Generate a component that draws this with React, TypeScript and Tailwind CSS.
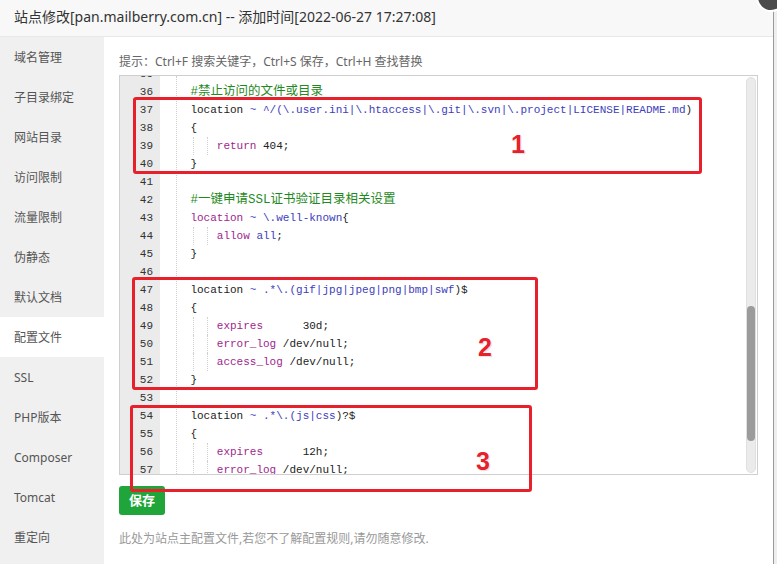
import React from "react";

type Tok = [string, string];

const C: Record<string, string> = {
    p: "text-[#222]",
    k: "text-[#a01f8d]",
    r: "text-[#3d3dbd]",
    c: "text-[#1f8a24] text-[12.5px]",
};

const lines: { n: number; lvl: number; toks: Tok[] }[] = [
    { n: 35, lvl: 0, toks: [] },
    { n: 36, lvl: 1, toks: [["c", "#禁止访问的文件或目录"]] },
    {
        n: 37,
        lvl: 1,
        toks: [
            ["p", "location"],
            ["r", " ~ ^/(\\.user.ini|\\.htaccess|\\.git|\\.svn|\\.project|LICENSE|README.md"],
            ["p", ")"],
        ],
    },
    { n: 38, lvl: 1, toks: [["p", "{"]] },
    { n: 39, lvl: 2, toks: [["k", "return"], ["p", " 404;"]] },
    { n: 40, lvl: 1, toks: [["p", "}"]] },
    { n: 41, lvl: 0, toks: [] },
    { n: 42, lvl: 1, toks: [["c", "#一键申请SSL证书验证目录相关设置"]] },
    { n: 43, lvl: 1, toks: [["k", "location"], ["r", " ~ \\.well-known"], ["p", "{"]] },
    { n: 44, lvl: 2, toks: [["k", "allow"], ["p", " "], ["r", "all"], ["p", ";"]] },
    { n: 45, lvl: 1, toks: [["p", "}"]] },
    { n: 46, lvl: 0, toks: [] },
    {
        n: 47,
        lvl: 1,
        toks: [
            ["p", "location"],
            ["r", " ~ .*\\.(gif|jpg|jpeg|png|bmp|swf"],
            ["p", ")$"],
        ],
    },
    { n: 48, lvl: 1, toks: [["p", "{"]] },
    { n: 49, lvl: 2, toks: [["k", "expires"], ["p", "      30d;"]] },
    { n: 50, lvl: 2, toks: [["k", "error_log"], ["p", " /dev/null;"]] },
    { n: 51, lvl: 2, toks: [["k", "access_log"], ["p", " /dev/null;"]] },
    { n: 52, lvl: 1, toks: [["p", "}"]] },
    { n: 53, lvl: 0, toks: [] },
    { n: 54, lvl: 1, toks: [["p", "location"], ["r", " ~ .*\\.(js|css"], ["p", ")?$"]] },
    { n: 55, lvl: 1, toks: [["p", "{"]] },
    { n: 56, lvl: 2, toks: [["k", "expires"], ["p", "      12h;"]] },
    { n: 57, lvl: 2, toks: [["k", "error_log"], ["p", " /dev/null;"]] },
];

const menu = [
    "域名管理",
    "子目录绑定",
    "网站目录",
    "访问限制",
    "流量限制",
    "伪静态",
    "默认文档",
    "配置文件",
    "SSL",
    "PHP版本",
    "Composer",
    "Tomcat",
    "重定向",
];

const mono = "font-['Liberation_Mono','Noto_Sans_CJK_SC',monospace] text-[11px]";

const Editor = () => (
    <div className="h-[400px] border border-[#cfcfcf] flex overflow-hidden">
        <div className="w-[40px] bg-[#ebebeb] overflow-hidden shrink-0">
            <div className={`-mt-[11px] ${mono} text-[#333] text-right pr-[7px]`}>
                {lines.map((l) => (
                    <div key={l.n} className="h-[18px] leading-[18px]">
                        {l.n}
                    </div>
                ))}
            </div>
        </div>
        <div className="flex-1 overflow-hidden relative">
            <div className="absolute left-[16px] top-0 bottom-0 border-l border-dotted border-[#cfcfcf]" />
            <div className={`-mt-[11px] pl-[4px] ${mono}`}>
                {lines.map((l) => (
                    <div key={l.n} className="h-[18px] leading-[18px] whitespace-pre relative">
                        {l.lvl === 2 && (
                            <>
                                <span className="absolute left-[29px] top-0 h-full border-l border-dotted border-[#cfcfcf]" />
                                <span className="absolute left-[43px] top-0 h-full border-l border-dotted border-[#cfcfcf]" />
                            </>
                        )}
                        {l.toks.length > 0 && <span>{l.lvl === 2 ? "        " : "    "}</span>}
                        {l.toks.map((t, i) => (
                            <span key={i} className={C[t[0]]}>
                                {t[1]}
                            </span>
                        ))}
                    </div>
                ))}
            </div>
        </div>
        <div className="w-[10px] shrink-0 py-px mr-px">
            <div className="h-full rounded-full bg-[#ebebeb] border border-[#e0e0e0]">
                <div className="mt-[228px] h-[135px] rounded-full bg-[#9b9b9b]" />
            </div>
        </div>
    </div>
);

const Mark = ({ n, cls }: { n: string; cls: string }) => (
    <div
        className={`absolute font-['Liberation_Sans',sans-serif] font-bold text-[25px] leading-[25px] text-[#e8202c] [text-shadow:0_0_2px_#fff,0_0_2px_#fff,1px_1px_1px_#ccc] ${cls}`}
    >
        {n}
    </div>
);

export default function App() {
    return (
        <div className="w-[777px] h-[564px] relative overflow-hidden flex bg-white font-['Noto_Sans','Noto_Sans_CJK_SC',sans-serif]">
            <div className="w-[773px] shrink-0 flex flex-col">
                <div className="h-[37px] shrink-0 bg-[#f8f8f8] border-b border-[#e8e8e8] pl-[14px] pb-[3px] flex items-center text-[14px] text-[#333]">
                    站点修改[pan.mailberry.com.cn] -- 添加时间[2022-06-27 17:27:08]
                </div>
                <div className="flex flex-1">
                    <div className="w-[104px] shrink-0 bg-[#f0f0f0]">
                        {menu.map((m) => (
                            <div
                                key={m}
                                className={`h-[40px] flex items-center pl-[14px] pt-[2px] text-[12px] text-[#555] ${
                                    m === "配置文件" ? "bg-white text-[#333]" : ""
                                }`}
                            >
                                {m}
                            </div>
                        ))}
                    </div>
                    <div className="flex-1 pl-[15px] pr-[15px] pt-[16px]">
                        <div className="text-[12px] leading-[18px] text-[#666] mb-[4px]">
                            提示：Ctrl+F 搜索关键字，Ctrl+S 保存，Ctrl+H 查找替换
                        </div>
                        <Editor />
                        <button className="mt-[11px] h-[29px] px-[10px] rounded-[3px] bg-[#20a53a] text-white text-[13px] font-bold">
                            保存
                        </button>
                        <div className="mt-[16px] text-[12px] leading-[16px] text-[#999]">
                            此处为站点主配置文件,若您不了解配置规则,请勿随意修改.
                        </div>
                    </div>
                </div>
            </div>
            <div className="flex-1 border-l border-[#9a9a9a] bg-[#eeeeee]" />

            <div className="absolute left-[756px] -top-[18px] w-[30px] h-[30px] rounded-full bg-[#4b4b4b] border-2 border-white" />

            <div className="absolute left-[133px] top-[97px] w-[569px] h-[77px] border-[3px] border-[#e8202c] rounded-[3px]" />
            <div className="absolute left-[132px] top-[277px] w-[406px] h-[113px] border-[3px] border-[#e8202c] rounded-[3px]" />
            <div className="absolute left-[130px] top-[405px] w-[402px] h-[87px] border-[3px] border-[#e8202c] rounded-[3px]" />
            <Mark n="1" cls="left-[511px] top-[132px]" />
            <Mark n="2" cls="left-[478px] top-[335px]" />
            <Mark n="3" cls="left-[476px] top-[449px]" />
        </div>
    );
}
